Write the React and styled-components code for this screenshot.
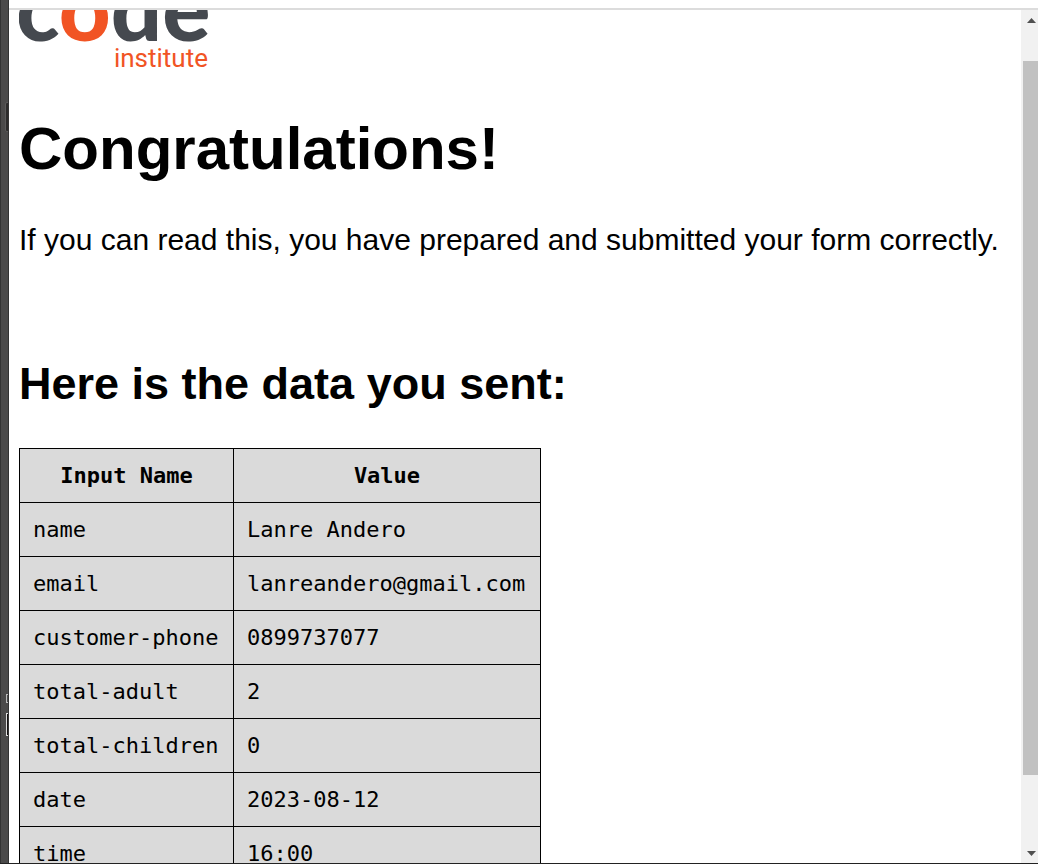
import React from "react";
import styled, { createGlobalStyle } from "styled-components";

const GlobalStyle = createGlobalStyle`
  * { box-sizing: border-box; }
  body {
    margin: 0;
    background: #fff;
    color: #000;
    font-family: "Liberation Sans", Arial, sans-serif;
    font-size: 30px;
  }
`;

const Window = styled.div`
  display: flex;
  height: 100vh;
  overflow: hidden;
  border-bottom: 1px solid #222;
`;

const Gutter = styled.div`
  position: relative;
  flex: 0 0 9px;
  overflow: hidden;
  background: #4b4a4a;
  border-left: 1px solid #333;
  border-right: 1px solid #333;
`;

const GutterMark = styled.span`
  position: absolute;
  left: ${(p) => p.$left}px;
  top: ${(p) => p.$top}px;
  width: 12px;
  height: ${(p) => p.$height}px;
  background: ${(p) => p.$fill};
  border: 1px solid ${(p) => p.$line};
  border-radius: ${(p) => p.$radius || 0}px;
`;

const Frame = styled.div`
  flex: 1;
  min-width: 0;
  display: flex;
  flex-direction: column;
`;

const TopStrip = styled.div`
  flex: 0 0 10px;
  border-bottom: 2px solid #dcdcdc;
`;

const Viewport = styled.div`
  flex: 1;
  min-height: 0;
  display: flex;
`;

const Content = styled.main`
  flex: 1;
  min-width: 0;
  overflow: hidden;
  padding: 0 10px;
`;

const Logo = styled.svg`
  display: block;
`;

const Title = styled.h1`
  margin: 43px 0 40px;
  font-size: 60px;
  line-height: 68px;
`;

const Message = styled.p`
  margin: 0 0 101px;
  line-height: 34px;
`;

const Subtitle = styled.h2`
  margin: 0 0 39px;
  font-size: 45px;
  line-height: 51px;
`;

const Table = styled.table`
  width: 522px;
  table-layout: fixed;
  border-collapse: collapse;
  background: #dadada;
  font-family: "DejaVu Sans Mono", monospace;
  font-size: 22px;
  line-height: 27px;

  th, td {
    height: 54px;
    padding: 13px;
    border: 1px solid #000;
    white-space: nowrap;
  }
  td { text-align: left; }
`;

const NameColumn = styled.col`
  width: 214px;
`;

const Scrollbar = styled.div`
  flex: 0 0 17px;
  display: flex;
  flex-direction: column;
  background: #f1f1f1;
  padding-left: 2px;
`;

const ScrollButton = styled.button`
  flex: 0 0 20px;
  display: flex;
  align-items: center;
  justify-content: center;
  padding: 0 0 0 1px;
  border: 0;
  background: transparent;
`;

const Track = styled.div`
  flex: 1;
  display: flex;
  flex-direction: column;
`;

const Space = styled.div`
  flex: ${(p) => p.$grow};
`;

const Thumb = styled.div`
  flex: 714;
  background: #c1c1c1;
`;

const rows = [
  ["name", "Lanre Andero"],
  ["email", "lanreandero@gmail.com"],
  ["customer-phone", "0899737077"],
  ["total-adult", "2"],
  ["total-children", "0"],
  ["date", "2023-08-12"],
  ["time", "16:00"],
];

function CodeInstituteLogo() {
  return (
    <Logo width="190" height="62" viewBox="0 0 190 62" role="img" aria-label="Code Institute">
      <text x="-3" y="31" fontFamily="Lato, sans-serif" fontWeight="900" fontSize="90" fill="#45494f">
        c<tspan fill="#f15424">o</tspan>de
      </text>
      <text x="189" y="57" textAnchor="end" fontFamily="Roboto, sans-serif" fontSize="26" fill="#f15424">
        institute
      </text>
    </Logo>
  );
}

export default function App() {
  return (
    <>
      <GlobalStyle />
      <Window>
        <Gutter>
          <GutterMark $left={4} $top={102} $height={30} $fill="#2d2c2c" $line="#5b5a5a" $radius={2} />
          <GutterMark $left={5} $top={694} $height={9} $fill="#4b4a4a" $line="#bbb" />
          <GutterMark $left={5} $top={713} $height={23} $fill="#171313" $line="#ddd" />
        </Gutter>
        <Frame>
          <TopStrip />
          <Viewport>
            <Content>
              <CodeInstituteLogo />
              <Title>Congratulations!</Title>
              <Message>If you can read this, you have prepared and submitted your form correctly.</Message>
              <Subtitle>Here is the data you sent:</Subtitle>
              <Table>
                <colgroup>
                  <NameColumn />
                  <col />
                </colgroup>
                <thead>
                  <tr>
                    <th scope="col">Input Name</th>
                    <th scope="col">Value</th>
                  </tr>
                </thead>
                <tbody>
                  {rows.map(([name, value]) => (
                    <tr key={name}>
                      <td>{name}</td>
                      <td>{value}</td>
                    </tr>
                  ))}
                </tbody>
              </Table>
            </Content>
            <Scrollbar>
              <ScrollButton aria-label="Scroll up">
                <svg width="9" height="5" viewBox="0 0 9 5"><path d="M0 5 4.500 0 9 5Z" fill="#505050" /></svg>
              </ScrollButton>
              <Track>
                <Space $grow={31} />
                <Thumb />
                <Space $grow={68} />
              </Track>
              <ScrollButton aria-label="Scroll down">
                <svg width="9" height="5" viewBox="0 0 9 5"><path d="M0 0H9L4.500 5Z" fill="#505050" /></svg>
              </ScrollButton>
            </Scrollbar>
          </Viewport>
        </Frame>
      </Window>
    </>
  );
}
